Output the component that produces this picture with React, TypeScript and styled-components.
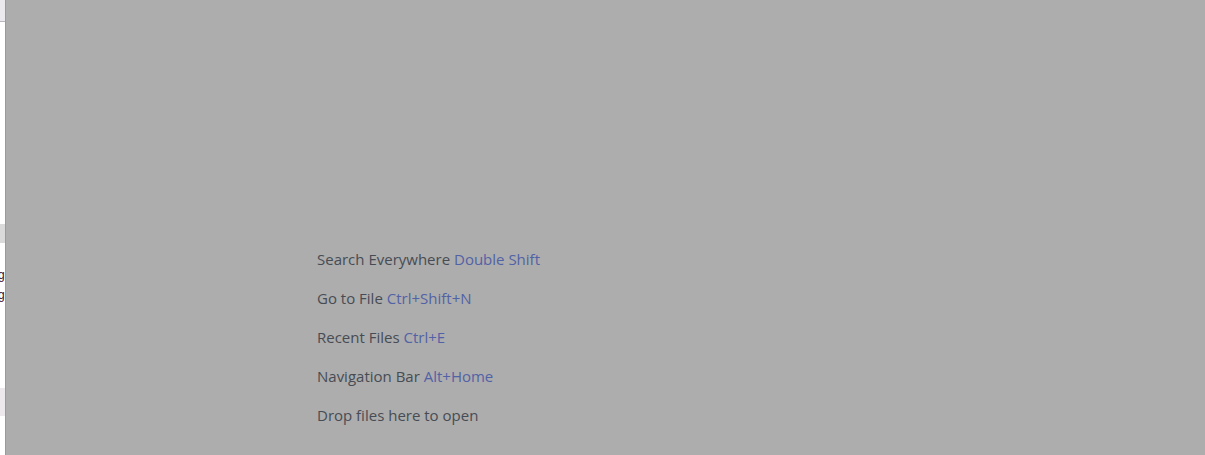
import React from "react";
import styled, { createGlobalStyle } from "styled-components";

const Global = createGlobalStyle`
  html, body { margin: 0; padding: 0; }
  body { width: 1205px; height: 455px; overflow: hidden; font-family: "Open Sans", "Noto Sans", sans-serif; }
`;

const Frame = styled.div`
  display: flex;
  width: 1205px;
  height: 455px;
`;

const LeftStrip = styled.div`
  width: 5px;
  display: flex;
  flex-direction: column;
  background: #ffffff;
  border-right: 1px solid #9a9a9a;
  overflow: hidden;
`;

const Band = styled.div<{ $h: number; $bg: string; $border?: boolean }>`
  height: ${(p) => p.$h}px;
  flex: none;
  background: ${(p) => p.$bg};
  border-bottom: ${(p) => (p.$border ? "1px solid #b9b6bd" : "none")};
`;

const Glyph = styled.div`
  height: 20px;
  flex: none;
  font-size: 12px;
  line-height: 20px;
  color: #3a1030;
  font-family: "Liberation Sans", sans-serif;
  margin-left: -2px;
`;

const Main = styled.div`
  flex: 1;
  background: #adadad;
  padding: 246px 0 0 311px;
  box-sizing: border-box;
  display: flex;
  flex-direction: column;
`;

const Hint = styled.div`
  height: 39px;
  font-size: 15px;
  line-height: 27px;
  color: #474c54;
  white-space: nowrap;
`;

const Key = styled.span`
  color: #5262a6;
`;

const hints: [string, string][] = [
  ["Search Everywhere", "Double Shift"],
  ["Go to File", "Ctrl+Shift+N"],
  ["Recent Files", "Ctrl+E"],
  ["Navigation Bar", "Alt+Home"],
  ["Drop files here to open", ""],
];

export default function App() {
  return (
    <>
      <Global />
      <Frame>
        <LeftStrip>
          <Band $h={21} $bg="#ebe8ee" $border />
          <Band $h={202} $bg="#ffffff" />
          <Band $h={19} $bg="#dadada" />
          <Band $h={22} $bg="#ffffff" />
          <Glyph>g</Glyph>
          <Glyph>g</Glyph>
          <Band $h={83} $bg="#ffffff" />
          <Band $h={28} $bg="#ede8ec" />
          <Band $h={40} $bg="#ffffff" />
        </LeftStrip>
        <Main>
          {hints.map(([label, key]) => (
            <Hint key={label}>
              {label}
              {key && <Key> {key}</Key>}
            </Hint>
          ))}
        </Main>
      </Frame>
    </>
  );
}
